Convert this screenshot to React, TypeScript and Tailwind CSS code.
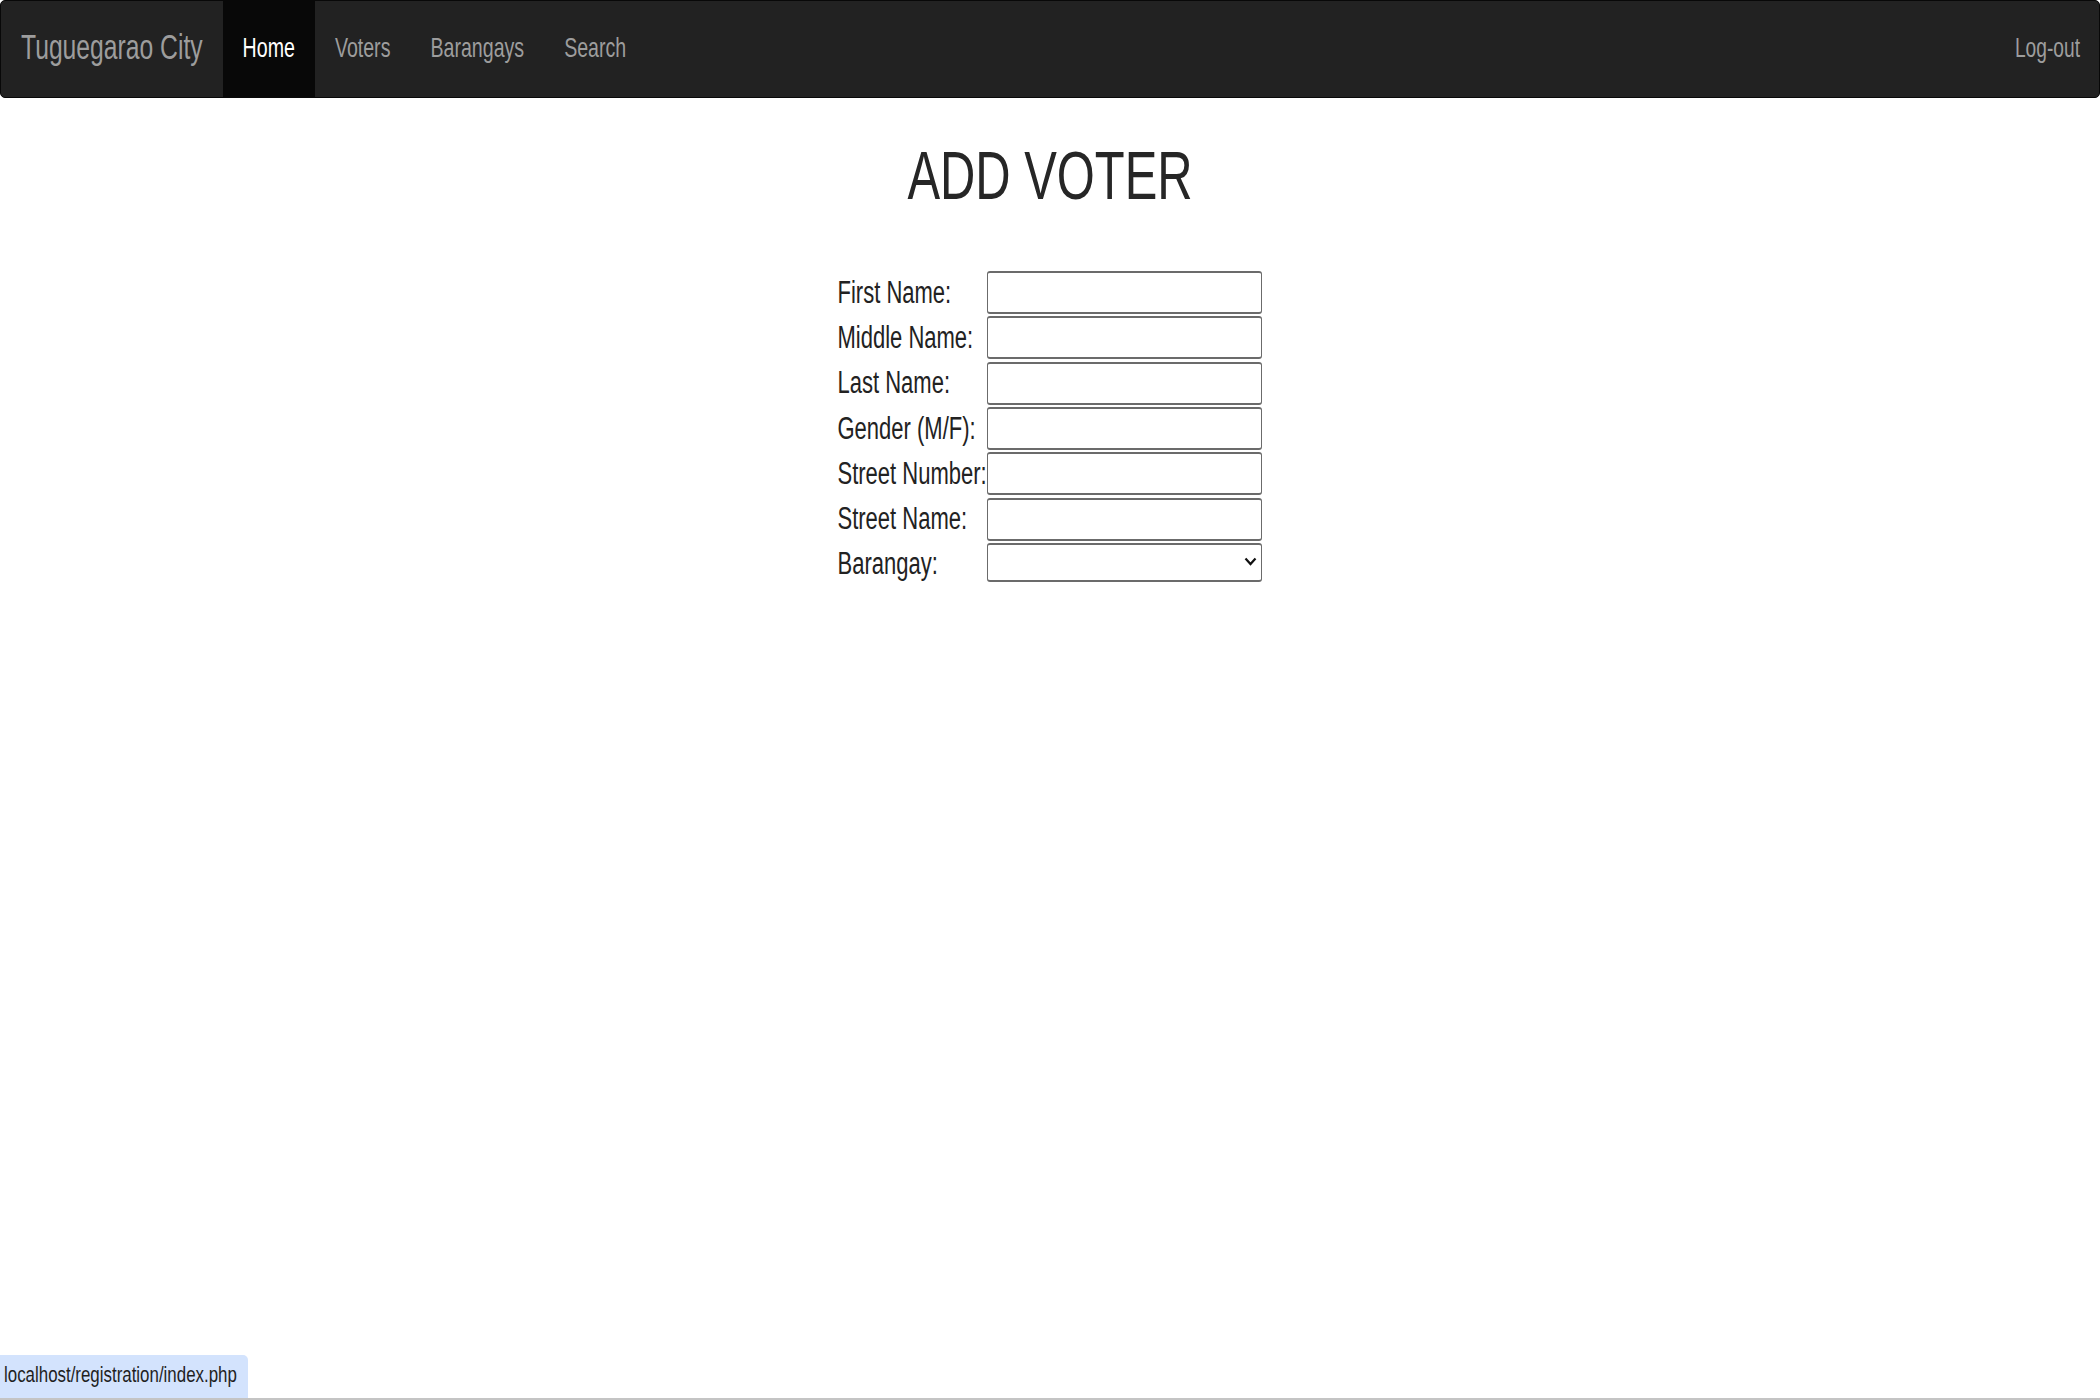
import { ChangeEvent, useState } from 'react'

const FIELDS = [
  { key: 'first', label: 'First Name:' },
  { key: 'middle', label: 'Middle Name:' },
  { key: 'last', label: 'Last Name:' },
  { key: 'gender', label: 'Gender (M/F):' },
  { key: 'streetNo', label: 'Street Number:' },
  { key: 'street', label: 'Street Name:' },
]

const NAV = ['Home', 'Voters', 'Barangays', 'Search']

const Tall = ({ children, className = 'scale-y-[1.4]' }: { children: React.ReactNode; className?: string }) => (
  <span className={`inline-block whitespace-nowrap ${className}`}>{children}</span>
)

export default function App() {
  const [form, setForm] = useState<Record<string, string>>({})
  const [barangay, setBarangay] = useState('')

  const update = (key: string) => (e: ChangeEvent<HTMLInputElement>) =>
    setForm({ ...form, [key]: e.target.value })

  return (
    <div className="h-[1400px] overflow-hidden flex flex-col bg-white font-['Liberation_Sans',Arial,sans-serif] text-[#333]">
      {/* navbar */}
      <nav className="h-[98px] shrink-0 flex items-stretch bg-[#222] border-[1.4px] border-[#080808] rounded-[5px]">
        <a className="flex items-center px-[20px] pb-[1px] text-[24.7px] leading-none text-[#9d9d9d]">
          <Tall>Tuguegarao City</Tall>
        </a>
        <ul className="flex items-stretch">
          {NAV.map((item, i) => (
            <li key={item} className="flex">
              <a
                className={
                  'flex items-center px-[20px] pb-[1px] text-[19.6px] leading-none ' +
                  (i === 0 ? 'bg-[#080808] text-white' : 'text-[#9d9d9d]')
                }
              >
                <Tall>{item}</Tall>
              </a>
            </li>
          ))}
        </ul>
        <a className="ml-auto flex items-center pr-[19px] pb-[2px] text-[19.2px] leading-none text-[#9d9d9d]">
          <Tall>Log-out</Tall>
        </a>
      </nav>

      <h1 className="mt-[47px] h-[60px] shrink-0 flex items-center justify-center text-[48.9px] leading-none font-normal text-[#262626]">
        <Tall>ADD VOTER</Tall>
      </h1>

      <div className="mt-[65px] flex justify-center">
        <div className="w-[425px] flex flex-col">
          {FIELDS.map((f) => (
            <div key={f.key} className="h-[45.3px] flex items-center">
              <label className="w-[149px] shrink-0 text-[22px] leading-none text-[#222]">
                <Tall>{f.label}</Tall>
              </label>
              <input
                value={form[f.key] ?? ''}
                onChange={update(f.key)}
                className="w-[275px] h-[43px] bg-white border-x border-y-2 border-[#6b6b6b] rounded-[3px] px-2 outline-none"
              />
            </div>
          ))}
          <div className="h-[45.3px] flex items-start pt-[1px]">
            <label className="w-[149px] shrink-0 pt-[10px] text-[22px] leading-none text-[#222]">
              <Tall>Barangay:</Tall>
            </label>
            <div className="relative">
              <select
                value={barangay}
                onChange={(e) => setBarangay(e.target.value)}
                className="appearance-none w-[275px] h-[39px] bg-white border-x border-y-2 border-[#6b6b6b] rounded-[3px] px-2 outline-none"
              >
                <option value=""></option>
              </select>
              <svg
                className="absolute right-[5px] top-[14px] pointer-events-none"
                width="13"
                height="9"
                viewBox="0 0 13 9"
                fill="none"
              >
                <path d="M1.5 1.5 L6.5 7 L11.5 1.5" stroke="#111" strokeWidth="2.2" />
              </svg>
            </div>
          </div>
        </div>
      </div>

      {/* browser status bubble */}
      <div className="mt-auto flex">
        <div className="h-[43px] flex items-center pl-[4px] pr-[11px] bg-[#d3e3fd] rounded-tr-[5px] text-[16.9px] leading-none text-[#1f1f1f]">
          <Tall className="scale-y-[1.3]">localhost/registration/index.php</Tall>
        </div>
      </div>
      <div className="h-[2px] shrink-0 bg-[#c4c4c4]" />
    </div>
  )
}
